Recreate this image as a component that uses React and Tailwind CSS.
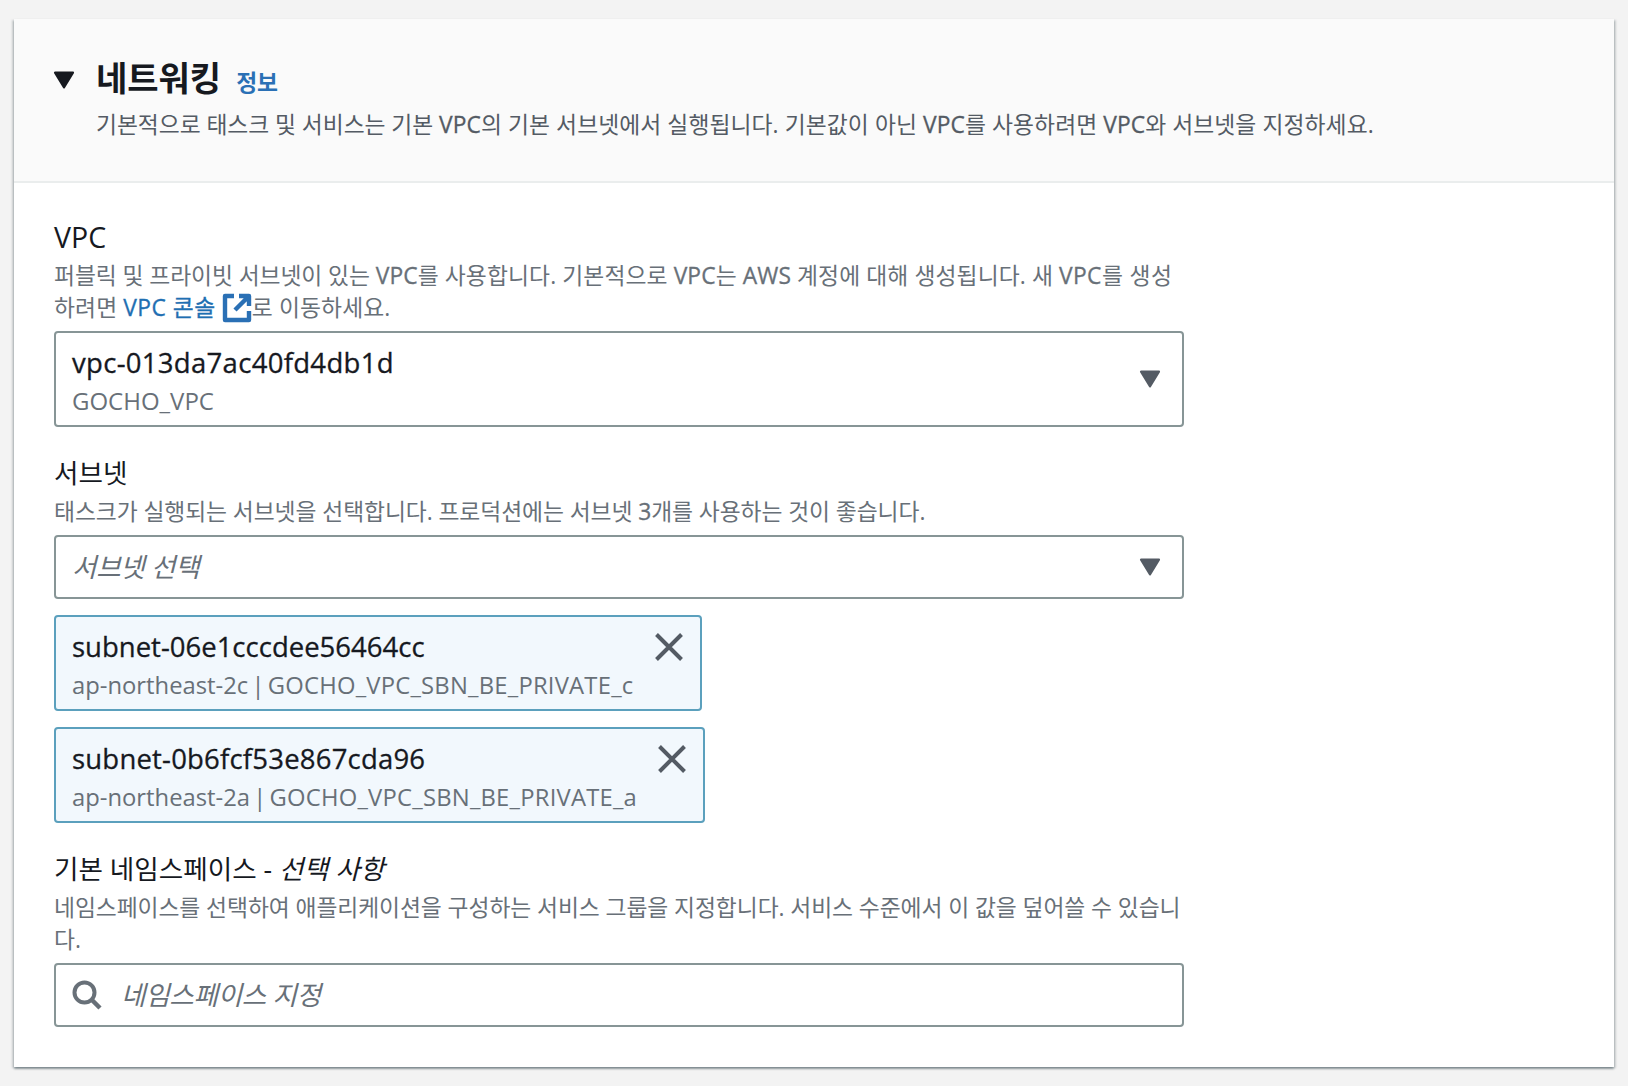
const F = "font-['Open_Sans','Noto_Sans_CJK_KR',sans-serif]";

function Caret({ className }) {
  return (
    <svg viewBox="0 0 20 17" className={className} aria-hidden="true">
      <path d="M1.5 1.5 H18.5 L10 15.5 Z" fill="currentColor" stroke="currentColor" strokeWidth="2" strokeLinejoin="round" />
    </svg>
  );
}

function Close() {
  return (
    <svg viewBox="0 0 30 30" className="w-[30px] h-[30px] text-[#545b64]" aria-hidden="true">
      <path d="M2.5 2.5 L27.5 27.5 M27.5 2.5 L2.5 27.5" stroke="currentColor" strokeWidth="4" fill="none" />
    </svg>
  );
}

function Chip({ id, az, name, width, idClass }) {
  return (
    <div className={`flex items-start justify-between h-[96px] rounded-[4px] border-2 border-[#5ba0bd] bg-[#f2f8fd] pl-[16px] pr-[16px] ${width}`}>
      <div className="flex flex-col">
        <span className={`text-[27.5px] [-webkit-text-stroke:0.3px] leading-[36px] mt-[12px] text-[#16191f] ${idClass}`}>{id}</span>
        <span className="text-[23.8px] leading-[32px] mt-[4px] text-[#687078] whitespace-nowrap [word-spacing:-3px]">
          {az} | <span className="tracking-[0.22px]">{name}</span>
        </span>
      </div>
      <div className="mt-[15px]"><Close /></div>
    </div>
  );
}

function Label({ children }) {
  return <div className="text-[26.6px] leading-[36px] text-[#16191f]">{children}</div>;
}

function Help({ children, className }) {
  return <div className={`text-[22.8px] leading-[32px] text-[#687078] whitespace-nowrap ${className}`}>{children}</div>;
}

function L({ children }) {
  return <span className="[-webkit-text-stroke:0.3px]">{children}</span>;
}

export default function App() {
  return (
    <div className={`${F} min-h-[1086px] bg-[#f3f3f3] px-[14px] pt-[19px]`}>
      <div className="bg-white h-[1048px] shadow-[0_2px_2px_0_rgba(0,28,36,0.35),2px_1px_2px_0_rgba(0,28,36,0.15),-2px_1px_2px_0_rgba(0,28,36,0.15)]">
        <header className="h-[164px] bg-[#fafafa] border-b-2 border-[#eaeded] pl-[40px] pt-[37px]">
          <div className="flex items-center">
            <Caret className="w-[22px] h-[18px] text-[#16191f] mt-[3px] -ml-px mr-px" />
            <h2 className="ml-[20px] text-[34px] leading-[44px] font-bold text-[#16191f]">네트워킹</h2>
            <a className="ml-[15px] mt-[9px] text-[22.8px] font-bold leading-[32px] text-[#2a70b5]">정보</a>
          </div>
          <p className="ml-[42px] mt-[9px] text-[22.8px] leading-[32px] text-[#545b64] whitespace-nowrap tracking-[0.08px]">
            <span className="tracking-[-0.06px]">기본적으로 태스크 및 서비스는 기본 </span><L>VPC</L>의 기본 서브넷에서 실행됩니다. 기본값이 아닌 <L>VPC</L>를 사용하려면 <L>VPC</L>와 서브넷을 지정하세요.
          </p>
        </header>

        <div className="pl-[40px] w-[1170px]">
          <div className="mt-[36px]">
            <Label><span className="text-[28.5px]">VPC</span></Label>
            <Help className="mt-[4px] tracking-[0.1px]">
              <span className="tracking-[-0.08px]">퍼블릭 및 프라이빗 서브넷이 있는 </span><L>VPC</L>를 사용합니다. 기본적으로 <L>VPC</L>는 <L>AWS</L> 계정에 대해 생성됩니다. 새 <span className="tracking-[0.4px]"><L>VPC</L>를 생성</span><br />
              하려면 <a className="text-[#1f6fb2] [-webkit-text-stroke:0.3px] tracking-[0.5px]">VPC 콘솔</a>{" "}
              <svg viewBox="0 0 30 30" className="inline-block w-[30px] h-[30px] align-[-7px] text-[#2a70b5]" aria-hidden="true">
                <path d="M12 3 H3 V27 H27 V18 M17 3 H27 V13 M27 3 L13 17" stroke="currentColor" strokeWidth="4.4" fill="none" strokeLinejoin="round" />
              </svg>
              로 이동하세요.
            </Help>
          </div>

          <div className="mt-[7px] h-[96px] rounded-[4px] border-2 border-[#879596] pl-[16px] pr-[21px] pt-[4px] flex items-center justify-between">
            <div className="flex flex-col">
              <span className="text-[27.5px] [-webkit-text-stroke:0.3px] tracking-[0.3px] leading-[36px] text-[#16191f]">vpc-013da7ac40fd4db1d</span>
              <span className="text-[24px] leading-[32px] mt-[4px] text-[#687078]">GOCHO_VPC</span>
            </div>
            <Caret className="w-[22px] h-[18px] text-[#545b64] mt-[-4px]" />
          </div>

          <div className="mt-[28px]">
            <Label>서브넷</Label>
            <Help className="mt-[5px] tracking-[-0.08px]">태스크가 실행되는 서브넷을 선택합니다. 프로덕션에는 서브넷 <L>3</L>개를 사용하는 것이 좋습니다.</Help>
          </div>

          <div className="mt-[7px] h-[64px] rounded-[4px] border-2 border-[#879596] pl-[16px] pr-[21px] flex items-center justify-between">
            <span className="mt-[2px] text-[26.6px] italic text-[#687078] tracking-[-0.3px]">서브넷 선택</span>
            <Caret className="w-[22px] h-[18px] text-[#545b64]" />
          </div>

          <div className="mt-[16px] flex flex-col gap-[16px] items-start">
            <Chip id="subnet-06e1cccdee56464cc" az="ap-northeast-2c" name="GOCHO_VPC_SBN_BE_PRIVATE_c" width="w-[648px]" idClass="" />
            <Chip id="subnet-0b6fcf53e867cda96" az="ap-northeast-2a" name="GOCHO_VPC_SBN_BE_PRIVATE_a" width="w-[651px]" idClass="tracking-[0.2px]" />
          </div>

          <div className="mt-[28px]">
            <Label>
              기본 네임스페이스 - <span className="italic tracking-[0.2px]">선택 사항</span>
            </Label>
            <Help className="mt-[5px] tracking-[-0.08px]">
              네임스페이스를 선택하여 애플리케이션을 구성하는 서비스 그룹을 지정합니다. 서비스 수준에서 이 값을 덮어쓸 수 있습니<br />
              다.
            </Help>
          </div>

          <div className="mt-[7px] h-[64px] rounded-[4px] border-2 border-[#879596] pl-[16px] flex items-center">
            <svg viewBox="0 0 30 30" className="w-[30px] h-[30px] text-[#687078]" aria-hidden="true">
              <circle cx="12.5" cy="12.5" r="10" stroke="currentColor" strokeWidth="4" fill="none" />
              <path d="M19.5 19.5 L28 28" stroke="currentColor" strokeWidth="4.5" fill="none" />
            </svg>
            <span className="mt-[2px] ml-[19px] text-[26.6px] italic text-[#687078] tracking-[-0.3px]">네임스페이스 지정</span>
          </div>
        </div>
      </div>
    </div>
  );
}
